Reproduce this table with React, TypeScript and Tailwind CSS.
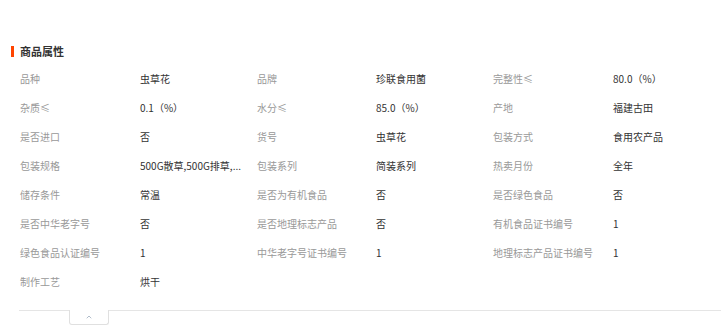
import { ChevronUp } from 'lucide-react';

const rows: [string, string, string, string, string, string][] = [
  ['品种', '虫草花', '品牌', '珍联食用菌', '完整性≤', '80.0（%）'],
  ['杂质≤', '0.1（%）', '水分≤', '85.0（%）', '产地', '福建古田'],
  ['是否进口', '否', '货号', '虫草花', '包装方式', '食用农产品'],
  ['包装规格', '500G散草,500G排草,...', '包装系列', '简装系列', '热卖月份', '全年'],
  ['储存条件', '常温', '是否为有机食品', '否', '是否绿色食品', '否'],
  ['是否中华老字号', '否', '是否地理标志产品', '否', '有机食品证书编号', '1'],
  ['绿色食品认证编号', '1', '中华老字号证书编号', '1', '地理标志产品证书编号', '1'],
  ['制作工艺', '烘干', '', '', '', ''],
];

function App() {
  return (
    <div className="min-h-screen bg-white pt-[44px] font-['Noto_Sans_CJK_SC',sans-serif] overflow-hidden">
      <div className="ml-[11px] flex h-[15px] items-center">
        <span className="h-[11px] w-[3px] bg-[#ff4400]" />
        <h2 className="ml-[6px] text-[11px] font-bold leading-[15px] text-[#333]">商品属性</h2>
      </div>

      <div className="ml-[20px] mt-[5px] grid w-[710px] grid-cols-[120px_117px_119px_117px_120px_117px] text-[10px] leading-[14px]">
        {rows.map((r, i) =>
          r.map((cell, j) => (
            <div
              key={`${i}-${j}`}
              className={`flex h-[29px] items-center whitespace-nowrap ${j % 2 === 0 ? 'text-[#999]' : 'text-[#333]'}`}
            >
              {cell}
            </div>
          ))
        )}
      </div>

      <div className="ml-[19px] mt-[14px] flex h-[15px] border-t border-[#e5e5e5]">
        <button className="relative -top-px ml-[50px] flex h-[15px] w-[40px] items-center justify-center rounded-b-[3px] border border-t-0 border-[#e0e0e0] bg-white text-[#8a9bb0]">
          <ChevronUp size={8} strokeWidth={2} />
        </button>
      </div>
    </div>
  );
}

export default App;
